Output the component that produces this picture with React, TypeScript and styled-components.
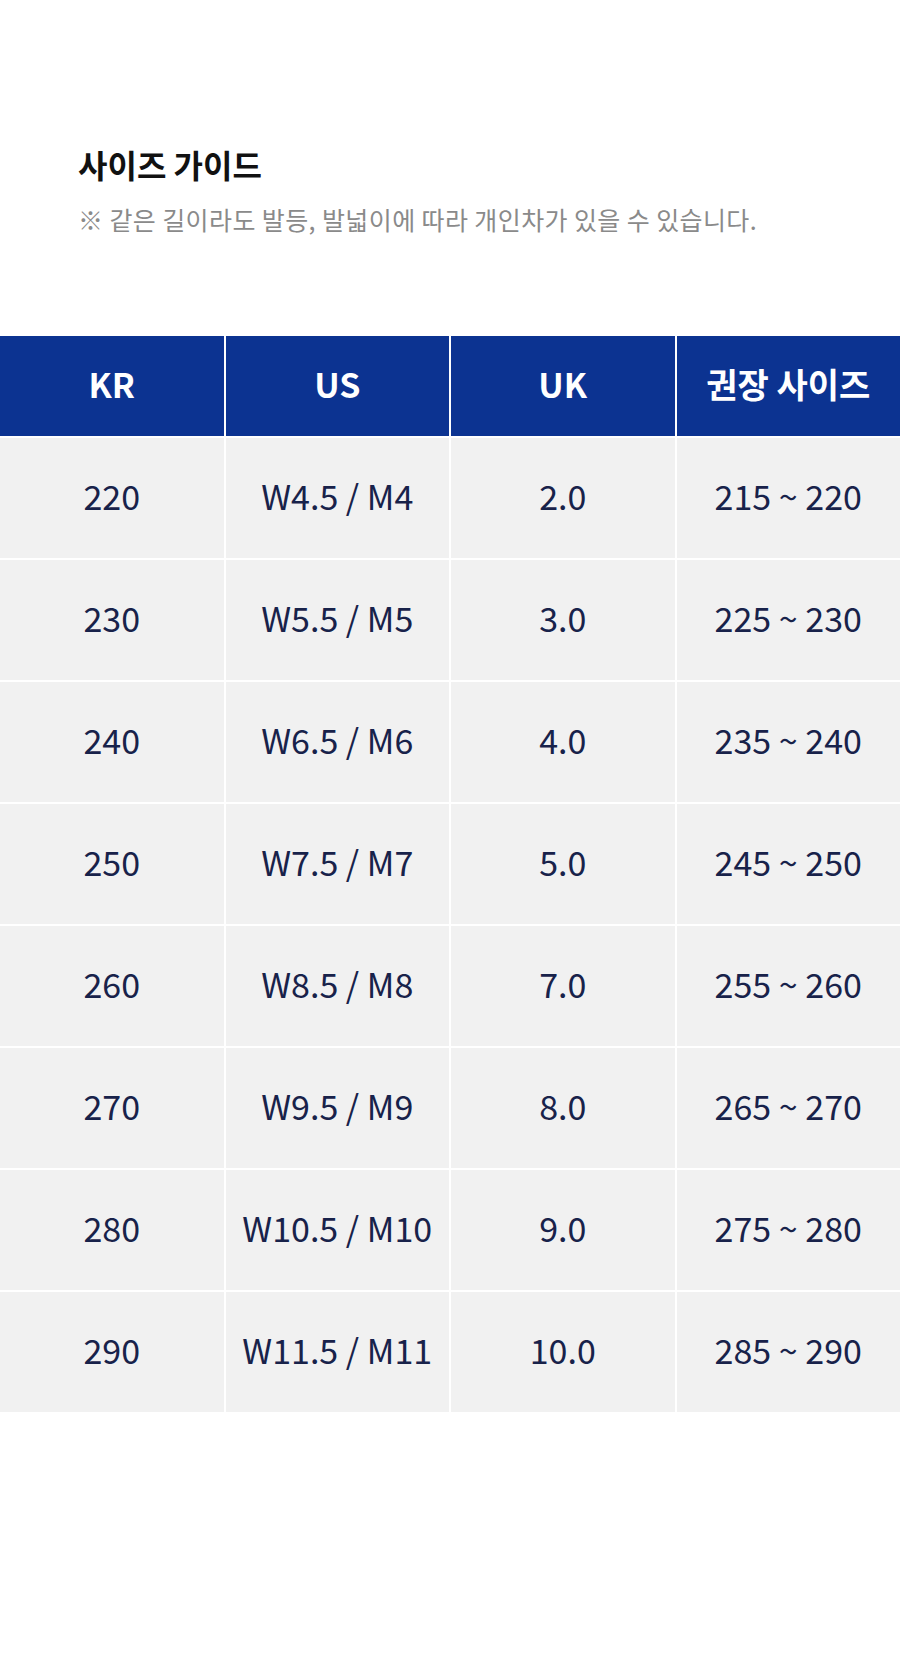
import React from 'react';
import styled, { createGlobalStyle } from 'styled-components';

const GlobalStyle = createGlobalStyle`
  body {
    margin: 0;
    background: #ffffff;
    font-family: "Noto Sans CJK KR", "Noto Sans", sans-serif;
  }
`;

const rows = [
  ['220', 'W4.5 / M4', '2.0', '215 ~ 220'],
  ['230', 'W5.5 / M5', '3.0', '225 ~ 230'],
  ['240', 'W6.5 / M6', '4.0', '235 ~ 240'],
  ['250', 'W7.5 / M7', '5.0', '245 ~ 250'],
  ['260', 'W8.5 / M8', '7.0', '255 ~ 260'],
  ['270', 'W9.5 / M9', '8.0', '265 ~ 270'],
  ['280', 'W10.5 / M10', '9.0', '275 ~ 280'],
  ['290', 'W11.5 / M11', '10.0', '285 ~ 290'],
];

const headers = ['KR', 'US', 'UK', '권장 사이즈'];

export default function App() {
  return (
    <>
      <GlobalStyle />
      <Page>
        <Intro>
          <Title>사이즈 가이드</Title>
          <Notice>※ 같은 길이라도 발등, 발넓이에 따라 개인차가 있을 수 있습니다.</Notice>
        </Intro>

        <Table>
          {headers.map((h) => (
            <HeadCell key={h}>{h}</HeadCell>
          ))}
          {rows.map((row) =>
            row.map((value, i) => <Cell key={row[0] + '-' + i}>{value}</Cell>)
          )}
        </Table>
      </Page>
    </>
  );
}

const Page = styled.div`
  width: 900px;
  min-height: 1660px;
  padding-top: 142px;
  box-sizing: border-box;
`;

const Intro = styled.div`
  padding: 0 78px;
`;

const Title = styled.h2`
  margin: 0;
  font-size: 32px;
  line-height: 44px;
  font-weight: 700;
  color: #111111;
`;

const Notice = styled.p`
  margin: 16px 0 0;
  font-size: 25px;
  line-height: 34px;
  letter-spacing: 0.4px;
  color: #8a8a8a;
`;

const Table = styled.div`
  margin-top: 100px;
  display: grid;
  grid-template-columns: repeat(4, 1fr);
  gap: 2px;
  background: #ffffff;
`;

const HeadCell = styled.div`
  height: 100px;
  box-sizing: border-box;
  padding-bottom: 6px;
  display: flex;
  align-items: center;
  justify-content: center;
  background: #0c3391;
  color: #ffffff;
  font-size: 34px;
  font-weight: 700;
`;

const Cell = styled.div`
  height: 120px;
  box-sizing: border-box;
  padding-bottom: 6px;
  display: flex;
  align-items: center;
  justify-content: center;
  background: #f1f1f1;
  color: #18224a;
  font-size: 34px;
`;
